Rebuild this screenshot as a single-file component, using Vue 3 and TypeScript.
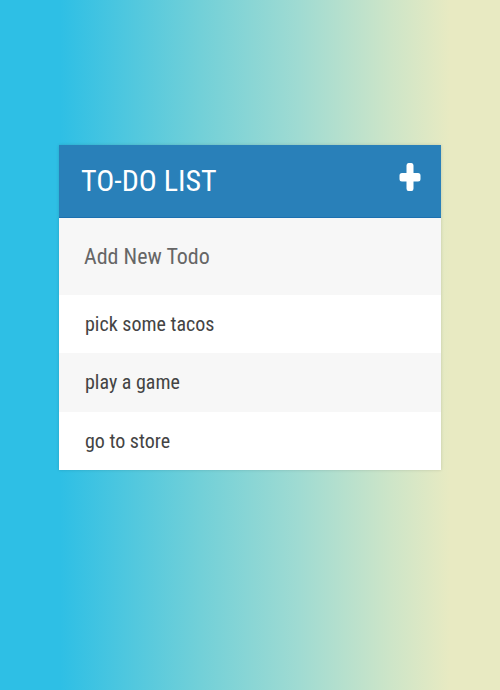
<script setup lang="ts">
import { ref } from 'vue'

interface Todo {
  id: number
  text: string
}

const todos = ref<Todo[]>([
  { id: 1, text: 'pick some tacos' },
  { id: 2, text: 'play a game' },
  { id: 3, text: 'go to store' },
])
const draft = ref('')
const showInput = ref(true)

function addTodo() {
  const text = draft.value.trim()
  if (!text) return
  todos.value.push({ id: Date.now(), text })
  draft.value = ''
}

function removeTodo(id: number) {
  todos.value = todos.value.filter((todo) => todo.id !== id)
}
</script>

<template>
  <main class="page">
    <section class="card">
      <header class="header">
        <h1 class="title">TO-DO LIST</h1>
        <button class="toggle" type="button" aria-label="Toggle new todo field" @click="showInput = !showInput">
          <svg class="plus" viewBox="0 0 22 30" aria-hidden="true">
            <path
              d="M9.500 1h3Q14.500 1 14.500 3.500V11h4.500Q21.500 11 21.500 13.500v3.500Q21.500 19.500 19 19.500h-4.500v7Q14.500 29 12.500 29h-3Q7.500 29 7.500 26.500v-7H3Q.5 19.500 .5 17v-3.500Q.5 11 3 11h4.500V3.500Q7.500 1 9.500 1Z"
            />
          </svg>
        </button>
      </header>
      <input
        v-if="showInput"
        v-model="draft"
        class="field"
        type="text"
        placeholder="Add New Todo"
        aria-label="Add New Todo"
        @keyup.enter="addTodo"
      />
      <ul class="list">
        <li v-for="todo in todos" :key="todo.id" class="item" @dblclick="removeTodo(todo.id)">
          {{ todo.text }}
        </li>
      </ul>
    </section>
  </main>
</template>

<style>
body {
  margin: 0;
}
</style>

<style scoped>
.page {
  box-sizing: border-box;
  min-height: 100vh;
  padding: 145px 59px 24px;
  background: linear-gradient(
    to right,
    #2ebfe5 0%,
    #2ebfe5 12%,
    #72d0d8 40%,
    #a0dbd2 60%,
    #cde5c8 78%,
    #e8eac2 90%,
    #e8eac2 100%
  );
  font-family: 'Roboto Condensed', 'Liberation Sans Narrow', Roboto, sans-serif;
}

.card {
  background: #fff;
  box-shadow: 0 0 3px rgba(0, 0, 0, 0.15);
}

.header {
  box-sizing: border-box;
  display: flex;
  align-items: center;
  justify-content: space-between;
  height: 73px;
  padding: 0 20px 0 22px;
  border-bottom: 1px solid #1c70b0;
  background: #2980b9;
  color: #fff;
}

.title {
  margin: 0;
  font-size: 30px;
  font-weight: 400;
  line-height: 42px;
}

.toggle {
  display: flex;
  margin: 0 0 8px;
  padding: 0;
  border: 0;
  background: none;
  color: inherit;
  cursor: pointer;
}

.plus {
  width: 22px;
  height: 30px;
  fill: currentColor;
}

.field {
  box-sizing: border-box;
  display: block;
  width: 100%;
  height: 77px;
  padding: 0 25px;
  border: 0;
  outline: 0;
  background: #f7f7f7;
  color: #666;
  font-family: inherit;
  font-size: 22px;
}

.field::placeholder {
  color: #666;
  opacity: 1;
}

.list {
  margin: 0;
  padding: 0;
  list-style: none;
}

.item {
  min-height: 58px;
  padding: 0 26px;
  background: #fff;
  color: #444;
  font-size: 20px;
  line-height: 58px;
}

.item:nth-child(even) {
  border-bottom: 1px solid #f7f7f7;
  background: #f7f7f7;
}
</style>
